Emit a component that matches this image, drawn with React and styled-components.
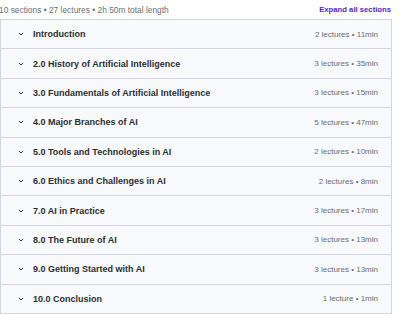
import React from "react";
import styled, { createGlobalStyle } from "styled-components";

const Global = createGlobalStyle`
  html, body { margin: 0; padding: 0; background: #fff; }
  body { font-family: "Liberation Sans", Arial, sans-serif; color: #2d2f31; }
`;

const Page = styled.div`
  width: 392px;
`;

const Header = styled.div`
  display: flex;
  align-items: center;
  justify-content: space-between;
  height: 19px;
`;

const Summary = styled.span`
  font-size: 8.4px;
  color: #6a6f73;
  margin-left: -1px;
`;

const ExpandAll = styled.button`
  border: 0;
  background: none;
  padding: 0;
  margin-right: 1px;
  font-family: inherit;
  font-size: 7.7px;
  font-weight: 700;
  color: #5624d0;
  cursor: pointer;
`;

const List = styled.div`
  border: 1px solid #d1d7dc;
  background: #f7f9fa;
`;

const Row = styled.div`
  display: flex;
  align-items: center;
  height: 28.4px;
  padding: 0 13px 0 17px;
  border-top: ${(p) => (p.$first ? "none" : "1px solid #d1d7dc")};
`;

const Chevron = styled.svg`
  width: 6px;
  height: 6px;
  flex: none;
  margin-right: 9px;
`;

const Title = styled.span`
  flex: 1;
  font-size: 9px;
  font-weight: 700;
  color: #2d2f31;
`;

const Meta = styled.span`
  font-size: 8px;
  color: #6a6f73;
`;

const sections = [
  ["Introduction", "2 lectures • 11min"],
  ["2.0 History of Artificial Intelligence", "3 lectures • 35min"],
  ["3.0 Fundamentals of Artificial Intelligence", "3 lectures • 15min"],
  ["4.0 Major Branches of AI", "5 lectures • 47min"],
  ["5.0 Tools and Technologies in AI", "2 lectures • 10min"],
  ["6.0 Ethics and Challenges in AI", "2 lectures • 8min"],
  ["7.0 AI in Practice", "3 lectures • 17min"],
  ["8.0 The Future of AI", "3 lectures • 13min"],
  ["9.0 Getting Started with AI", "3 lectures • 13min"],
  ["10.0 Conclusion", "1 lecture • 1min"],
];

export default function App() {
  return (
    <Page>
      <Global />
      <Header>
        <Summary>10 sections • 27 lectures • 2h 50m total length</Summary>
        <ExpandAll>Expand all sections</ExpandAll>
      </Header>
      <List>
        {sections.map(([t, m], i) => (
          <Row key={t} $first={i === 0}>
            <Chevron viewBox="0 0 6 6">
              <path d="M1.2 2.2 L3 4 L4.8 2.2" fill="none" stroke="#2d2f31" strokeWidth="1" strokeLinecap="round" strokeLinejoin="round" />
            </Chevron>
            <Title>{t}</Title>
            <Meta>{m}</Meta>
          </Row>
        ))}
      </List>
    </Page>
  );
}
